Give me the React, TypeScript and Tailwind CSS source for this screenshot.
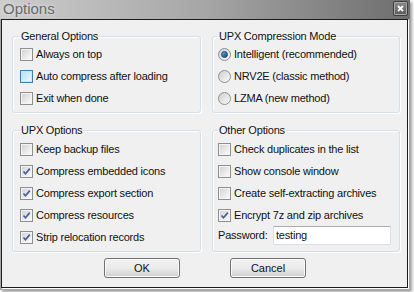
import React from 'react';

const font = { fontFamily: '"Liberation Sans", Arial, sans-serif' };

const CheckBox: React.FC<{ checked?: boolean; hover?: boolean }> = ({ checked, hover }) => (
  <span
    className={
      'relative flex h-[13px] w-[13px] shrink-0 items-center justify-center border ' +
      (hover ? 'border-[#3c7fb1]' : 'border-[#8e8f8f]')
    }
  >
    <span
      className={
        'h-[11px] w-[11px] border ' +
        (hover
          ? 'border-[#c6e6f7] bg-gradient-to-br from-[#b9e2f6] to-[#eaf6fd]'
          : 'border-[#f4f4f4] bg-gradient-to-br from-[#d4d4d4] to-[#fbfbfb]')
      }
    />
    {checked && (
      <svg className="absolute left-0 top-0" width="11" height="11" viewBox="0 0 11 11">
        <path d="M2.5 5.5 L4.5 7.8 L8.8 2.6" fill="none" stroke="#4a5f97" strokeWidth="1.7" />
      </svg>
    )}
  </span>
);

const Radio: React.FC<{ checked?: boolean }> = ({ checked }) => (
  <span className="flex h-[13px] w-[13px] shrink-0 items-center justify-center rounded-full border border-[#8e8f8f] bg-gradient-to-br from-[#cfcfcf] to-[#fafafa]">
    {checked && (
      <span className="h-[7px] w-[7px] rounded-full border border-[#1b4a78] bg-gradient-to-br from-[#5fb3ec] to-[#16406b]" />
    )}
  </span>
);

const Row: React.FC<{ children: React.ReactNode; control: React.ReactNode }> = ({ children, control }) => (
  <div className="flex h-[22px] items-center gap-[3px]">
    {control}
    <span className="tracking-[-0.2px] text-[#111]">{children}</span>
  </div>
);

const Group: React.FC<{ title: string; className?: string; children: React.ReactNode }> = ({ title, className, children }) => (
  <fieldset
    className={
      'rounded-[3px] border border-[#d5dfe5] px-[7px] shadow-[inset_1px_1px_0_#fff,1px_1px_0_#fff] ' + (className ?? '')
    }
  >
    <legend className="px-[1px] text-[11px] leading-[14px] tracking-[-0.2px] text-[#111]">{title}</legend>
    {children}
  </fieldset>
);

const WinButton: React.FC<{ label: string }> = ({ label }) => (
  <button className="h-[20px] w-[76px] rounded-[3px] border border-[#707070] bg-gradient-to-b from-[#f2f2f2] via-[#ebebeb] to-[#cfcfcf] text-[11px] text-[#111] shadow-[inset_0_0_0_1px_#fcfcfc]">
    {label}
  </button>
);

export default function App() {
  return (
    <div className="h-[292px] w-[414px] overflow-hidden bg-white" style={font}>
      <div className="h-[290px] w-[410px] bg-[#a8a8a8] shadow-[2px_2px_3px_rgba(0,0,0,0.4)]">
        {/* Title bar */}
        <div className="flex h-[19px] items-start justify-between bg-gradient-to-r from-[#cdcdcd] via-[#a6a6a6] to-[#6e6e6e]">
          <span className="pl-[3px] pt-[1px] text-[15px] leading-[16px] text-[#6a6a6a] [text-shadow:0_0_4px_#ececec]">
            Options
          </span>
          <div className="mr-[2px] mt-[1px] flex h-[15px] w-[15px] items-center justify-center rounded-[2px] border border-[#3e3e3e] bg-gradient-to-b from-[#8a8a8a] to-[#5a5a5a] shadow-[inset_0_0_0_1px_#a9a9a9]">
            <svg width="7" height="7" viewBox="0 0 7 7">
              <path d="M1 1 L6 6 M6 1 L1 6" stroke="#fff" strokeWidth="1.8" />
            </svg>
          </div>
        </div>

        {/* Client area */}
        <div className="ml-[1px] h-[269px] w-[407px] border border-[#1b1b1b] bg-[#f0f0f0] pl-[10px] pr-[7px] pt-[9px] text-[11px] shadow-[1px_1px_0_#fff]">
          <div className="grid grid-cols-[189px_188px] gap-x-[11px] gap-y-[10px]">
            <Group title="General Options" className="h-[84px]">
              <Row control={<CheckBox />}>Always on top</Row>
              <Row control={<CheckBox hover />}>Auto compress after loading</Row>
              <Row control={<CheckBox />}>Exit when done</Row>
            </Group>
            <Group title="UPX Compression Mode" className="h-[84px] pl-[5px]">
              <Row control={<Radio checked />}>Intelligent (recommended)</Row>
              <Row control={<Radio />}>NRV2E (classic method)</Row>
              <Row control={<Radio />}>LZMA (new method)</Row>
            </Group>
            <Group title="UPX Options" className="h-[129px] pt-[1px]">
              <Row control={<CheckBox />}>Keep backup files</Row>
              <Row control={<CheckBox checked />}>Compress embedded icons</Row>
              <Row control={<CheckBox checked />}>Compress export section</Row>
              <Row control={<CheckBox checked />}>Compress resources</Row>
              <Row control={<CheckBox checked />}>Strip relocation records</Row>
            </Group>
            <Group title="Other Options" className="h-[129px] pl-[5px] pt-[1px]">
              <Row control={<CheckBox />}>Check duplicates in the list</Row>
              <Row control={<CheckBox />}>Show console window</Row>
              <Row control={<CheckBox />}>Create self-extracting archives</Row>
              <Row control={<CheckBox checked />}>Encrypt 7z and zip archives</Row>
              <div className="-mt-[1px] flex h-[20px] items-center">
                <span className="w-[55px] tracking-[-0.2px] text-[#111]">Password:</span>
                <div className="flex h-[19px] w-[118px] items-center border border-[#dbdfe6] border-t-[#abadb3] bg-white pl-[2px] tracking-[-0.2px] text-[#111]">
                  testing
                </div>
              </div>
            </Group>
          </div>

          <div className="mt-[6px] flex justify-center gap-[50px] pr-[2px]">
            <WinButton label="OK" />
            <WinButton label="Cancel" />
          </div>
        </div>
      </div>
    </div>
  );
}
